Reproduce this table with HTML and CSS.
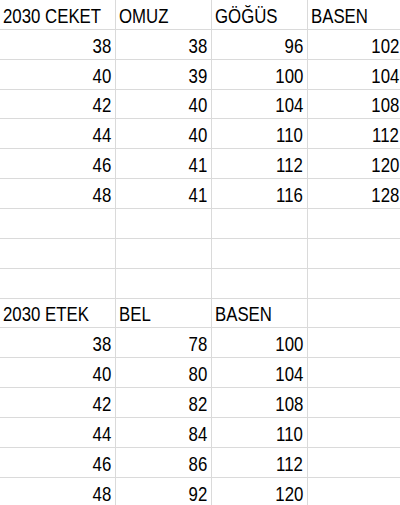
FILE: index.html
```html
<!DOCTYPE html>
<html lang="tr">
<head>
<meta charset="utf-8">
<title>Beden Tablosu</title>
<link rel="stylesheet" href="styles.css">
</head>
<body>
<div class="sheet">
  <div class="c t"><span>2030 CEKET</span></div><div class="c t"><span>OMUZ</span></div><div class="c t"><span>GÖĞÜS</span></div><div class="c t"><span>BASEN</span></div>
  <div class="c n"><span>38</span></div><div class="c n"><span>38</span></div><div class="c n"><span>96</span></div><div class="c n"><span>102</span></div>
  <div class="c n"><span>40</span></div><div class="c n"><span>39</span></div><div class="c n"><span>100</span></div><div class="c n"><span>104</span></div>
  <div class="c n"><span>42</span></div><div class="c n"><span>40</span></div><div class="c n"><span>104</span></div><div class="c n"><span>108</span></div>
  <div class="c n"><span>44</span></div><div class="c n"><span>40</span></div><div class="c n"><span>110</span></div><div class="c n"><span>112</span></div>
  <div class="c n"><span>46</span></div><div class="c n"><span>41</span></div><div class="c n"><span>112</span></div><div class="c n"><span>120</span></div>
  <div class="c n"><span>48</span></div><div class="c n"><span>41</span></div><div class="c n"><span>116</span></div><div class="c n"><span>128</span></div>
  <div class="c"></div><div class="c"></div><div class="c"></div><div class="c"></div>
  <div class="c"></div><div class="c"></div><div class="c"></div><div class="c"></div>
  <div class="c"></div><div class="c"></div><div class="c"></div><div class="c"></div>
  <div class="c t"><span>2030 ETEK</span></div><div class="c t"><span>BEL</span></div><div class="c t"><span>BASEN</span></div><div class="c"></div>
  <div class="c n"><span>38</span></div><div class="c n"><span>78</span></div><div class="c n"><span>100</span></div><div class="c"></div>
  <div class="c n"><span>40</span></div><div class="c n"><span>80</span></div><div class="c n"><span>104</span></div><div class="c"></div>
  <div class="c n"><span>42</span></div><div class="c n"><span>82</span></div><div class="c n"><span>108</span></div><div class="c"></div>
  <div class="c n"><span>44</span></div><div class="c n"><span>84</span></div><div class="c n"><span>110</span></div><div class="c"></div>
  <div class="c n"><span>46</span></div><div class="c n"><span>86</span></div><div class="c n"><span>112</span></div><div class="c"></div>
  <div class="c n"><span>48</span></div><div class="c n"><span>92</span></div><div class="c n"><span>120</span></div><div class="c"></div>
</div>
</body>
</html>
```
FILE: styles.css
```css
html, body {
  margin: 0;
  padding: 0;
  background: #ffffff;
  overflow: hidden;
}
.sheet {
  display: grid;
  grid-template-columns: 116px 96px 96px 96px;
  grid-auto-rows: 29.86px;
  width: 404px;
  font-family: "Liberation Sans", Arial, sans-serif;
  font-size: 20px;
  color: #000000;
}
.c {
  box-sizing: border-box;
  border-right: 1px solid #dadada;
  border-bottom: 1px solid #dadada;
  display: flex;
  align-items: flex-end;
  line-height: 20px;
  padding: 0 4px 3px 3px;
  white-space: nowrap;
}
.c span {
  display: inline-block;
  flex: none;
  transform: scaleX(0.84);
}
.t {
  justify-content: flex-start;
}
.t span {
  transform-origin: left bottom;
}
.n {
  justify-content: flex-end;
}
.n span {
  transform-origin: right bottom;
}
```
